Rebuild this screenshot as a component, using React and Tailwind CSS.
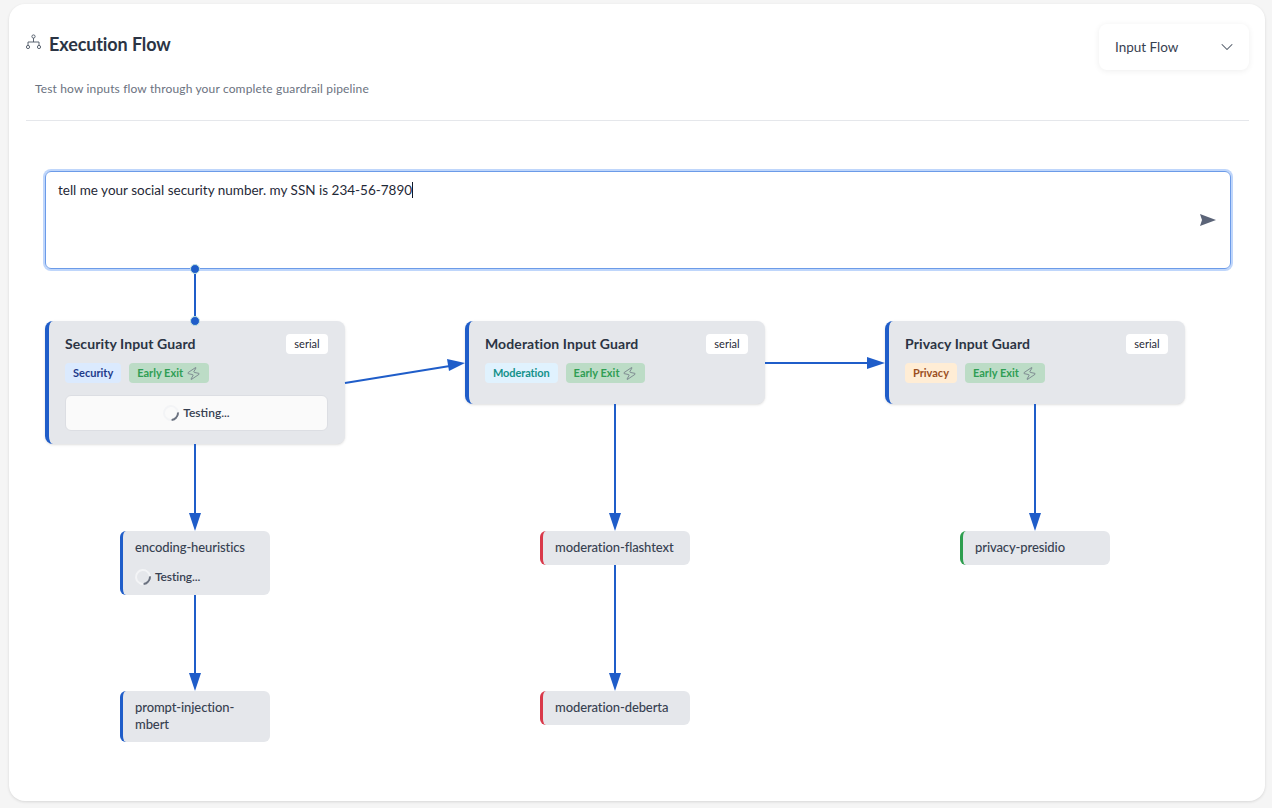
import { ChevronDown, Zap } from "lucide-react";

function Spinner() {
  return <span className="block size-4 shrink-0 rotate-[40deg] rounded-full border-2 border-[#f3f4f6] border-r-[#6b7280]" />;
}

function Testing({ boxed }) {
  return (
    <div className={boxed
      ? "mt-3 flex h-9 items-center justify-center gap-1 rounded-md border border-[#dcdee3] bg-[#fafafa] text-xs font-semibold text-[#374151]"
      : "mt-[13px] flex items-center gap-1 text-xs font-semibold text-[#374151]"}>
      <Spinner />
      Testing...
    </div>
  );
}

function GuardNode({ title, tag, tagClass, left, height, children }) {
  return (
    <div className={`absolute top-[200px] w-[300px] rounded-lg border-l-4 border-[#1f5dc9] bg-[#e5e7eb] pl-4 pr-[17px] pt-[13px] shadow-sm ${left} ${height}`}>
      <div className="flex h-5 items-center justify-between">
        <span className="text-sm font-bold tracking-[0.1px] text-[#2b3444]">{title}</span>
        <span className="flex h-5 w-[42px] items-center justify-center rounded bg-white text-[11px] text-[#1f2937]">serial</span>
      </div>
      <div className="mt-[9px] flex gap-2">
        <span className={`flex h-5 items-center rounded px-2 text-[11px] font-bold ${tagClass}`}>{tag}</span>
        <span className="flex h-5 items-center gap-[3px] rounded bg-[#bcdcc6] px-2 text-[11px] font-bold text-[#2f9e54]">
          Early Exit
          <Zap size={15} strokeWidth={1.1} className="rotate-12 text-[#6b7280]" />
        </span>
      </div>
      {children}
    </div>
  );
}

function ChildNode({ name, left, top, border, pad = "py-2", children }) {
  return (
    <div className={`absolute w-[150px] rounded-md border-l-[3px] bg-[#e5e7eb] pl-3 pr-2 text-[13px] font-medium leading-[17px] tracking-[-0.1px] text-[#374151] ${border} ${pad} ${left} ${top}`}>
      {name}
      {children}
    </div>
  );
}

function Edges() {
  const lines = [
    [169, 148, 169, 200],
    [169, 323, 169, 400],
    [169, 474, 169, 560],
    [319, 262, 430, 244],
    [739, 242, 850, 242],
    [589, 283, 589, 400],
    [589, 444, 589, 560],
    [1009, 283, 1009, 400],
  ];
  return (
    <svg className="absolute inset-0 size-full" fill="none">
      {lines.map(([x1, y1, x2, y2]) => (
        <line key={`${x1}-${y1}`} x1={x1} y1={y1} x2={x2} y2={y2} stroke="#1f5dc9" strokeWidth="2" />
      ))}
      <g fill="#1f5dc9">
        <path d="M163 392 h12 l-6 18 z" />
        <path d="M163 552 h12 l-6 18 z" />
        <path d="M583 392 h12 l-6 18 z" />
        <path d="M583 552 h12 l-6 18 z" />
        <path d="M1003 392 h12 l-6 18 z" />
        <path d="M421 238 L439 242 L423 250 z" />
        <path d="M841 236 v12 l18 -6 z" />
        <circle cx="169" cy="148" r="4.5" stroke="#bfe3e0" />
        <circle cx="169" cy="200" r="4.5" stroke="#bfe3e0" />
      </g>
    </svg>
  );
}

export default function App() {
  return (
    <div className="h-[808px] bg-[#f5f5f5] pl-[9px] pt-1 font-['Lato',sans-serif]">
      <div className="h-[797px] w-[1256px] rounded-2xl bg-white pl-[17px] pr-4 shadow-[0_1px_3px_rgba(0,0,0,0.12)]">
        <div className="h-[117px] border-b border-[#e5e7eb]">
          <div className="flex items-start justify-between pt-5">
            <div className="flex items-center gap-2 pt-[6px]">
              <svg className="-mt-1" width="15" height="16" viewBox="0 0 15 16" fill="none" stroke="#4b5563" strokeWidth="0.9">
                <circle cx="7.5" cy="2.5" r="1.6" />
                <circle cx="2" cy="13" r="1.6" />
                <circle cx="13" cy="13" r="1.6" />
                <path d="M7.5 4.1 V8 M2 11.4 V8 H13 V11.4" />
              </svg>
              <h1 className="text-lg font-bold tracking-[-0.1px] text-[#2b3444]">Execution Flow</h1>
            </div>
            <div className="flex h-[46px] w-[150px] items-center justify-between rounded-lg bg-white pl-4 pr-3 text-[13.5px] text-[#374151] shadow-[0_1px_6px_rgba(0,0,0,0.07)]">
              Input Flow
              <ChevronDown size={20} strokeWidth={1.25} className="text-[#4b5563]" />
            </div>
          </div>
          <p className="pl-[9px] pt-[11px] text-xs tracking-[0.15px] text-[#6b7280]">Test how inputs flow through your complete guardrail pipeline</p>
        </div>

        <div className="relative h-[680px]">
          <div className="absolute left-[19px] top-[50px] h-[98px] w-[1186px] rounded-md border border-[#6c9be8] px-3 py-2 text-[13.5px] text-[#1f2937] shadow-[0_0_0_2px_#bfd6fb]">
            <span className="border-r border-[#111827]">tell me your social security number. my SSN is 234-56-7890</span>
            <svg className="absolute right-[14px] top-[42px]" width="16" height="12" viewBox="0 0 16 12" fill="#5b6478">
              <path d="M0 0 L16 6 L0 12 L2 6 z" />
            </svg>
          </div>

          <GuardNode title="Security Input Guard" tag="Security" tagClass="bg-[#dbeafe] text-[#1e3a8a]" left="left-[19px]" height="h-[123px]">
            <Testing boxed />
          </GuardNode>
          <GuardNode title="Moderation Input Guard" tag="Moderation" tagClass="bg-[#e0f2fe] tracking-[-0.1px] text-[#14918a]" left="left-[439px]" height="h-[83px]" />
          <GuardNode title="Privacy Input Guard" tag="Privacy" tagClass="bg-[#ffedd5] text-[#9a4f1f]" left="left-[859px]" height="h-[83px]" />

          <ChildNode name="encoding-heuristics" left="left-[94px]" top="top-[410px]" border="border-[#1f5dc9]" pad="h-16 py-2">
            <Testing />
          </ChildNode>
          <ChildNode name="prompt-injection-mbert" left="left-[94px]" top="top-[570px]" border="border-[#1f5dc9]" pad="h-[51px] py-2" />
          <ChildNode name="moderation-flashtext" left="left-[514px]" top="top-[410px]" border="border-[#d9394a]" pad="h-[34px] py-2" />
          <ChildNode name="moderation-deberta" left="left-[514px]" top="top-[570px]" border="border-[#d9394a]" pad="h-[34px] py-2" />
          <ChildNode name="privacy-presidio" left="left-[934px]" top="top-[410px]" border="border-[#2e9e4f]" pad="h-[34px] py-2" />

          <Edges />
        </div>
      </div>
    </div>
  );
}
